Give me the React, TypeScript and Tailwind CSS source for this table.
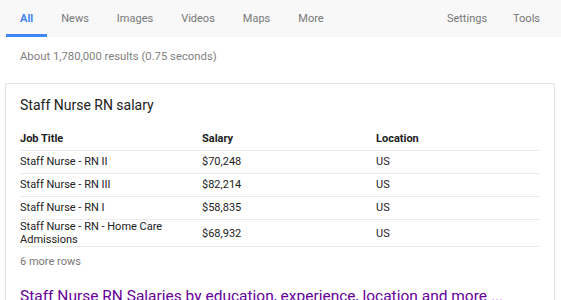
import React from 'react';

const tabs = ['News', 'Images', 'Videos', 'Maps', 'More'];

const rows = [
  { title: 'Staff Nurse - RN II', salary: '$70,248', location: 'US' },
  { title: 'Staff Nurse - RN III', salary: '$82,214', location: 'US' },
  { title: 'Staff Nurse - RN I', salary: '$58,835', location: 'US' },
  { title: 'Staff Nurse - RN - Home Care Admissions', salary: '$68,932', location: 'US', tall: true },
];

const App: React.FC = () => {
  return (
    <div className="min-h-[300px] w-[561px] overflow-hidden bg-white font-[Roboto,Arial,sans-serif]">
      {/* Top tabs */}
      <div className="flex h-[37px] items-stretch bg-[#f8f8f8] text-[11px] text-[#777]">
        <div className="ml-[6px] flex items-center border-b-[3px] border-[#4285f4] px-[14px] pt-[4px] font-bold text-[#4285f4]">
          All
        </div>
        {tabs.map((t) => (
          <div key={t} className="flex items-center px-[14px] pt-[1px]">
            {t}
          </div>
        ))}
        <div className="ml-auto mr-[8px] flex items-stretch">
          <div className="flex items-center px-[13px] pt-[1px]">Settings</div>
          <div className="flex items-center px-[13px] pt-[1px]">Tools</div>
        </div>
      </div>

      {/* Result stats */}
      <div className="pl-[20px] pt-[13px] text-[11.3px] leading-[14px] text-[#808080]">
        About 1,780,000 results (0.75 seconds)
      </div>

      {/* Salary card */}
      <div className="ml-[5px] mt-[19px] w-[550px] rounded-[2px] border border-[#e3e3e3] pl-[14px] pt-[12px] pb-[20px] shadow-[0_1px_2px_rgba(0,0,0,0.08)]">
        <div className="mb-[14px] text-[14px] leading-[18px] text-[#222]">Staff Nurse RN salary</div>

        <div className="w-[520px] text-[11px] text-[#222]">
          <div className="flex h-[23px] items-center border-b border-[#ebebeb] font-bold">
            <div className="w-[182px]">Job Title</div>
            <div className="w-[174px]">Salary</div>
            <div className="flex-1">Location</div>
          </div>
          {rows.map((r) => (
            <div
              key={r.title}
              className={
                r.tall
                  ? 'flex h-[27px] items-center border-b border-[#ebebeb] leading-[13px]'
                  : 'flex h-[23px] items-center border-b border-[#ebebeb]'
              }
            >
              <div className="w-[182px] pr-[20px]">{r.title}</div>
              <div className="w-[174px]">{r.salary}</div>
              <div className="flex-1">{r.location}</div>
            </div>
          ))}
        </div>

        <div className="mt-[8px] text-[11px] leading-[14px] text-[#777]">6 more rows</div>

        <div className="mt-[17px] text-[15.5px] leading-[20px] text-[#660099]">
          Staff Nurse RN Salaries by education, experience, location and more ...
        </div>
      </div>
    </div>
  );
};

export default App;
